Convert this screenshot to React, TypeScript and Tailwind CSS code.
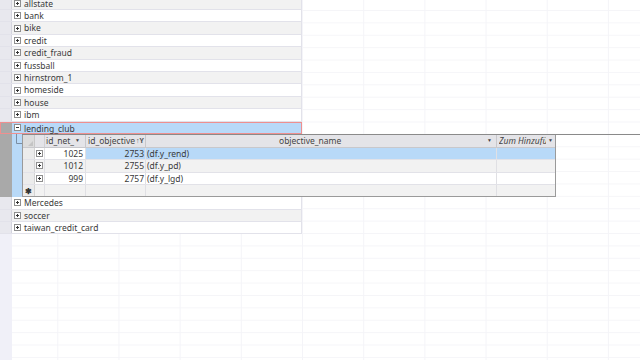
import React from 'react';

const top = ['allstate', 'bank', 'bike', 'credit', 'credit_fraud', 'fussball', 'hirnstrom_1', 'homeside', 'house', 'ibm'];
const bottom = ['Mercedes', 'soccer', 'taiwan_credit_card'];

function Box({ minus = false }: { minus?: boolean }) {
  return (
    <svg width="7" height="7" viewBox="0 0 7 7" className="block">
      <rect x="0.5" y="0.5" width="6" height="6" fill="#fff" stroke="#8f8f8f" />
      <line x1="2" y1="3.5" x2="5" y2="3.5" stroke="#333" />
      {!minus && <line x1="3.5" y1="2" x2="3.5" y2="5" stroke="#333" />}
    </svg>
  );
}

function MainRow({ name, idx }: { name: string; idx: number }) {
  const bg = idx % 2 === 0 ? 'bg-[#f2f2f2]' : 'bg-white';
  return (
    <div className={`flex h-[12.4px] w-[302px] border-b border-[#e2e2ea] border-r ${bg}`}>
      <div className="w-[12px] shrink-0 bg-[#e8e8ee] border-r border-[#d4d4de]" />
      <div className="w-[11px] shrink-0 flex items-center justify-center">
        <Box />
      </div>
      <div className="pl-[1px] leading-[12.5px] text-[8.5px] text-[#3a3a3a]">{name}</div>
    </div>
  );
}

export default function App() {
  return (
    <div
      className="w-[640px] h-[360px] overflow-hidden flex flex-col bg-white bg-[linear-gradient(to_right,#f4f4f8_1px,transparent_1px),linear-gradient(to_bottom,#f5f5f8_1px,transparent_1px)] bg-[size:61.2px_12.4px] bg-[position:302px_10px]"
      style={{ fontFamily: '"Noto Sans", "Open Sans", sans-serif' }}
    >
      <div className="mt-[-2.4px]">
        {top.map((n, i) => (
          <MainRow key={n} name={n} idx={i} />
        ))}
        {/* selected row */}
        <div className="flex h-[12.4px] w-[302px] border border-[#ef8f8f] bg-[#b8d9f8]">
          <div className="w-[11px] shrink-0 bg-[#a9a9a9]" />
          <div className="w-[11px] shrink-0 flex items-center justify-center">
            <Box minus />
          </div>
          <div className="pl-[1px] leading-[11.5px] text-[8.5px] text-[#3a3a3a]">lending_club</div>
        </div>
        {/* sub datasheet */}
        <div className="flex h-[63.4px]">
          <div className="w-[12px] shrink-0 bg-[#a9a9a9]" />
          <div className="w-[10px] shrink-0 bg-[#b8d9f8]">
            <svg width="10" height="63" className="block">
              <line x1="4.5" y1="0" x2="4.5" y2="9.5" stroke="#7a8ea4" />
              <line x1="4.5" y1="9.5" x2="10" y2="9.5" stroke="#7a8ea4" />
            </svg>
          </div>
          <div className="flex-1 border-t border-[#8a8a8a]">
            <div className="w-[534px] h-[62.4px] border-l border-r border-b border-[#9a9a9a] bg-white flex flex-col text-[8.5px] text-[#3a3a3a]">
              {/* header */}
              <div className="flex h-[13px] shrink-0 bg-[#e4e4e8] border-b border-[#c8c8cc] text-[#444]">
                <div className="w-[12px] shrink-0 bg-[#dcdcdc] border-r border-[#c8c8c8] flex items-end justify-end pr-[1px] pb-[1px]">
                  <svg width="5" height="5"><polygon points="5,0 5,5 0,5" fill="#c4c4c4" /></svg>
                </div>
                <div className="w-[10px] shrink-0 border-r border-[#d0d0d4]" />
                <div className="w-[41px] shrink-0 border-r border-[#c8c8cc] flex items-center pl-[1px] leading-none">
                  <span>id_net_</span>
                  <span className="ml-auto mr-[5px] text-[5px]">▼</span>
                </div>
                <div className="w-[60px] shrink-0 border-r border-[#c8c8cc] flex items-center pl-[2px] leading-none whitespace-nowrap">
                  <span>id_objective</span>
                  <span className="ml-[1px] text-[7px] font-bold text-[#555]">↑Y</span>
                </div>
                <div className="w-[351px] shrink-0 border-r border-[#c8c8cc] flex items-center leading-none">
                  <span className="ml-[133px]">objective_name</span>
                  <span className="ml-auto mr-[4px] text-[5px]">▼</span>
                </div>
                <div className="flex-1 flex items-center leading-none pl-[2px]">
                  <span className="italic whitespace-nowrap w-[47px] overflow-hidden">Zum Hinzufü</span>
                  <span className="ml-[2px] text-[5px]">▼</span>
                </div>
              </div>
              {[
                { a: '1025', b: '2753', c: '(df.y_rend)', sel: true, bg: '' },
                { a: '1012', b: '2755', c: '(df.y_pd)', sel: false, bg: 'bg-[#f2f2f2]' },
                { a: '999', b: '2757', c: '(df.y_lgd)', sel: false, bg: 'bg-white' },
              ].map((r) => (
                <div key={r.a} className={`flex h-[12.4px] shrink-0 border-b border-[#e2e2e8] leading-[12px] ${r.sel ? 'bg-[#b8d9f8]' : r.bg}`}>
                  <div className="w-[12px] shrink-0 bg-[#ececec] border-r border-[#d4d4d4]" />
                  <div className={`w-[10px] shrink-0 border-r border-[#e0e0e4] flex items-center justify-center ${r.sel ? 'bg-white' : ''}`}>
                    <Box />
                  </div>
                  <div className={`w-[41px] shrink-0 border-r border-[#e0e0e4] text-right pr-[2px] ${r.sel ? 'bg-white' : ''}`}>{r.a}</div>
                  <div className="w-[60px] shrink-0 border-r border-[#e0e0e4] text-right pr-[1px]">{r.b}</div>
                  <div className="w-[351px] shrink-0 border-r border-[#e0e0e4] pl-[1px]">{r.c}</div>
                  <div className="flex-1" />
                </div>
              ))}
              <div className="flex flex-1 bg-[#f2f2f2]">
                <div className="w-[12px] shrink-0 bg-[#ececec] border-r border-[#d4d4d4] flex items-center justify-center text-[8px] leading-none font-bold text-[#333]">✱</div>
                <div className="w-[10px] shrink-0 border-r border-[#e0e0e4]" />
                <div className="w-[41px] shrink-0 border-r border-[#e0e0e4]" />
                <div className="w-[60px] shrink-0 border-r border-[#e0e0e4]" />
                <div className="w-[351px] shrink-0 border-r border-[#e0e0e4]" />
                <div className="flex-1" />
              </div>
            </div>
          </div>
        </div>
        {bottom.map((n, i) => (
          <MainRow key={n} name={n} idx={i + 1} />
        ))}
      </div>
      <div className="flex-1 w-[12px] bg-[#f0f0f8]" />
    </div>
  );
}
